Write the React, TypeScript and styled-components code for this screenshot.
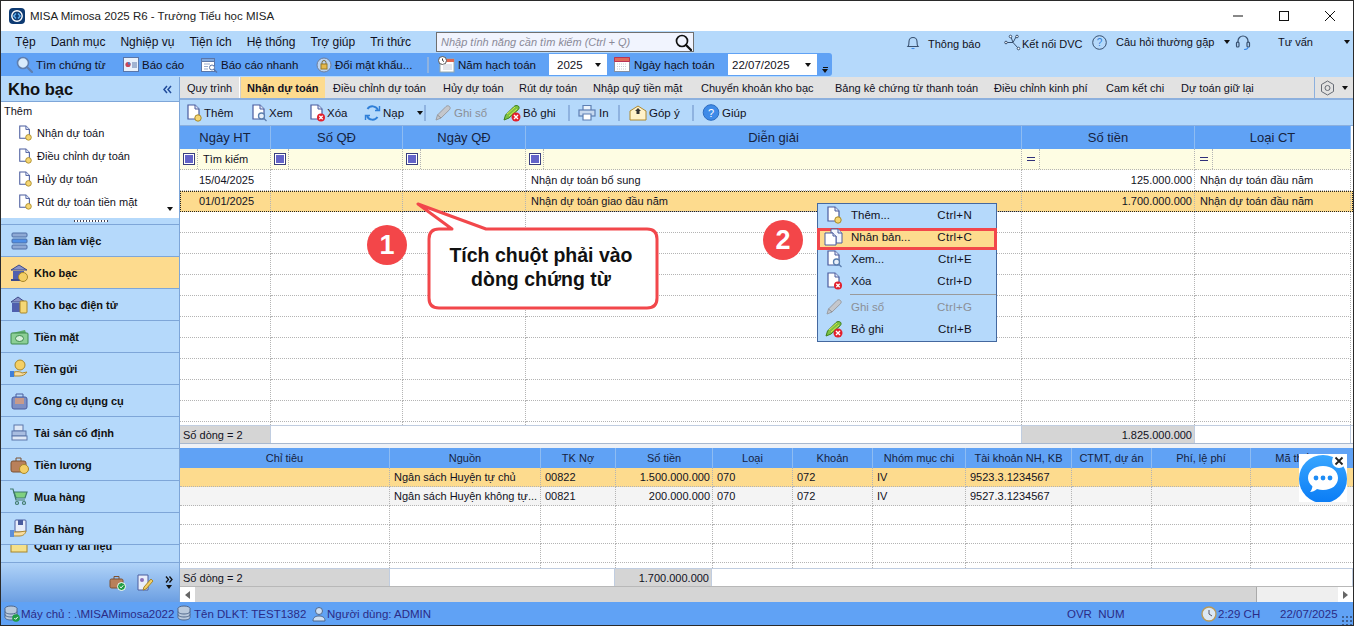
import React from 'react';
import styled, { createGlobalStyle } from 'styled-components';

const Global = createGlobalStyle`
  html, body { margin: 0; padding: 0; background: #fff; overflow: hidden; }
  * { box-sizing: border-box; }
`;

const FONT = `"Liberation Sans", Arial, sans-serif`;
const SKY = '#b5d9fb';
const BLUE = '#60a2f5';
const AMBER = '#fddb8e';
const INK = '#111122';

const Window = styled.div`
  position: relative; width: 1354px; height: 626px; overflow: hidden;
  display: flex; flex-direction: column;
  border: 1px solid #2a2a2a;
  font: 11px ${FONT}; color: ${INK}; background: #fff;
`;
const TitleBar = styled.div`
  height: 30px; flex: none; display: flex; align-items: center; padding-left: 8px; gap: 5px;
  font-size: 11.5px; color: #222;
`;
const TitleText = styled.span`flex: 1;`;
const WinButtons = styled.div`display: flex;`;
const WinButton = styled.div`width: 46px; height: 30px; display: flex; align-items: center; justify-content: center;`;

const MenuBar = styled.div`
  height: 22px; flex: none; background: ${SKY}; display: flex; align-items: center;
`;
const Grip = styled.div`
  width: 6px; height: 18px; margin-left: 4px; flex: none;
  background-image: radial-gradient(#7f9fc8 45%, transparent 50%); background-size: 2px 2px;
`;
const MenuItems = styled.div`display: flex; gap: 15px; margin-left: 4px; width: 421px; font-size: 12px;`;
const MenuItem = styled.span`white-space: nowrap;`;
const SearchBox = styled.div`
  width: 258px; height: 20px; background: #f1f4fe; border: 1px solid #6f6f6f; display: flex; align-items: center;
  justify-content: space-between; padding: 0 1px 0 4px; font-style: italic; color: #8a8a98; font-size: 11px;
`;
const RightMenu = styled.div`display: flex; align-items: center; margin-left: auto; height: 22px;`;
const RightItem = styled.span<{ $w: number }>`
  display: inline-flex; align-items: center; gap: 1px; white-space: nowrap; width: ${p => p.$w}px; flex: none;
`;
const RightLabel = styled.span<{ $ml?: number; $low?: boolean }>`
  margin-left: ${p => p.$ml ?? 0}px; padding-top: ${p => (p.$low ? 3 : 0)}px;
`;
const Caret = styled.span<{ $ml?: number; $mr?: number }>`
  display: inline-block; width: 0; height: 0; border: 3.5px solid transparent; border-top: 4px solid #111; border-bottom: 0;
  margin-left: ${p => p.$ml ?? 0}px; margin-right: ${p => p.$mr ?? 0}px; flex: none;
`;

const QuickRow = styled.div`height: 24px; flex: none; background: ${SKY}; display: flex; font-size: 11.5px;`;
const QuickBar = styled.div`
  width: 831px; height: 23px; background: ${BLUE}; display: flex; align-items: center; border-radius: 0 3px 3px 0;
`;
const QuickItem = styled.span<{ $w: number; $pl?: number }>`
  display: inline-flex; align-items: center; gap: 3px; width: ${p => p.$w}px; padding-left: ${p => p.$pl ?? 0}px; white-space: nowrap; flex: none;
`;
const VSep = styled.span<{ $ml?: number; $mr?: number }>`
  width: 2px; height: 16px; background: #8fb3e0; flex: none;
  margin-left: ${p => p.$ml ?? 0}px; margin-right: ${p => p.$mr ?? 0}px;
`;
const Combo = styled.div<{ $w: number; $pl: number }>`
  width: ${p => p.$w}px; height: 21px; background: #fff; display: flex; align-items: center; justify-content: space-between;
  padding: 0 6px 0 ${p => p.$pl}px; flex: none;
`;
const Overflow = styled.div`
  margin-left: 3px; width: 10px; height: 23px; display: flex; flex-direction: column; align-items: center; justify-content: flex-end; padding-bottom: 3px; gap: 1px;
`;
const OverflowBar = styled.span`width: 5px; height: 1px; background: #111;`;

const Body = styled.div`flex: 1; min-height: 0; display: flex;`;
const Sidebar = styled.div`
  width: 178px; flex: none; display: flex; flex-direction: column; background: ${SKY};
`;
const SideHead = styled.div`
  height: 25px; flex: none; display: flex; align-items: center; justify-content: space-between; padding: 0 7px 0 7px;
  font-weight: bold; font-size: 16.5px; color: #111; border-bottom: 1px solid #7ea6d8; background: ${SKY};
`;
const AddPanel = styled.div`
  height: 116px; flex: none; background: #fff; padding: 1px 0 0 3px; position: relative; overflow: hidden;
`;
const AddTitle = styled.div`height: 18px; line-height: 16px;`;
const AddItem = styled.div`
  height: 23px; display: flex; align-items: center; gap: 5px; padding-left: 14px;
`;
const PanelCaret = styled.span`position: absolute; right: 6px; bottom: 5px;`;
const Splitter = styled.div`
  height: 6px; flex: none; display: flex; justify-content: center; align-items: center; padding-left: 1px;
`;
const SplitterDots = styled.span`
  width: 34px; height: 2px; background-image: repeating-linear-gradient(90deg, #445 0 1px, #fff 1px 3px);
`;
const NavList = styled.div`flex: 1; min-height: 0; overflow: hidden; border-top: 1px solid #7ea6d8;`;
const NavItem = styled.div<{ $active?: boolean }>`
  position: relative; z-index: 1;
  height: 32px; display: flex; align-items: center; padding-left: 8px; gap: 5px; font-weight: bold; color: #111;
  border-bottom: 1px solid #7ea6d8; background: ${p => (p.$active ? AMBER : SKY)};
`;
const NavItemUnder = styled(NavItem)`z-index: 0; margin-top: -15px; border-bottom: 0;`;
const SideBottom = styled.div`
  height: 40px; flex: none; display: flex; align-items: center; justify-content: flex-end; gap: 11px; padding-right: 6px;
  background: linear-gradient(#b0d3f8, #6c9fe2); border-top: 1px solid #7ea6d8;
`;
const MoreBox = styled.div`display: flex; flex-direction: column; align-items: center; gap: 2px;`;

const Main = styled.div`
  flex: 1; min-width: 0; display: flex; flex-direction: column; border-left: 1px solid #7ea6d8;
`;
const Tabs = styled.div`
  height: 23px; flex: none; background: #e2e2e2; display: flex; border-bottom: 2px solid #8cb0de; overflow: hidden;
`;
const Tab = styled.div<{ $active?: boolean; $w: number; $pl?: number }>`
  width: ${p => p.$w}px; flex: none; display: flex; align-items: center; padding-left: ${p => p.$pl ?? 8}px; white-space: nowrap;
  background: ${p => (p.$active ? AMBER : 'transparent')}; font-weight: ${p => (p.$active ? 'bold' : 'normal')};
  ${p => (p.$active ? 'border-left: 1px solid #d0d0d0;' : '')}
`;
const TabFirst = styled(Tab)`border-right: 1px solid #fff;`;
const TabGear = styled.div`
  margin-left: auto; width: 39px; flex: none; display: flex; align-items: center; gap: 7px; padding-left: 5px;
  border-left: 1px solid #8cb0de;
`;
const Toolbar = styled.div`
  height: 26px; flex: none; background: ${SKY}; display: flex; align-items: center; padding-left: 6px; border-bottom: 1px solid #8cb0de; font-size: 11.5px;
`;
const ToolBtn = styled.span<{ $w: number; $off?: boolean }>`
  display: inline-flex; align-items: center; gap: 2px; width: ${p => p.$w}px; flex: none; white-space: nowrap;
  color: ${p => (p.$off ? '#8b8f96' : INK)};
`;

const TopGrid = styled.div`flex: 1; min-height: 0; display: flex; flex-direction: column;`;
const GridBody = styled.div`flex: 1; min-height: 0; overflow: hidden;`;
const Row = styled.div<{ $cols: string; $h: number; $bg?: string; $focus?: boolean }>`
  display: grid; grid-template-columns: ${p => p.$cols}; height: ${p => p.$h}px; background: ${p => p.$bg ?? '#fff'};
  ${p => (p.$focus ? 'outline: 1px dotted #222; outline-offset: -1px;' : '')}
`;
const Head = styled.div<{ $size: number }>`
  display: flex; align-items: center; justify-content: center; background: ${BLUE}; font-size: ${p => p.$size}px;
  border-right: 1px solid #8ebcf2; white-space: nowrap; overflow: hidden; color: #16233f;
`;
const Cell = styled.div<{ $right?: boolean; $pl?: number }>`
  display: flex; align-items: center; justify-content: ${p => (p.$right ? 'flex-end' : 'flex-start')};
  padding: 0 ${p => (p.$right ? 2 : 0)}px 0 ${p => p.$pl ?? 5}px; white-space: nowrap; overflow: hidden;
  border-right: 1px dotted #b4b4b4; border-bottom: 1px dotted #b4b4b4;
`;
const FilterCell = styled.div`
  display: flex; align-items: stretch; border-right: 1px dotted #b4b4b4; border-bottom: 1px dotted #b4b4b4; background: #fefde3; white-space: nowrap;
`;
const FilterOp = styled.div`
  width: 18px; flex: none; display: flex; align-items: center; justify-content: center; border-right: 1px dotted #b4b4b4;
`;
const FilterLabel = styled.div`padding-left: 5px; display: flex; align-items: center;`;
const FilterBox = styled.span`
  width: 12px; height: 12px; border: 1px solid #3a3f7e; background: #fff; display: flex; align-items: center; justify-content: center;
`;
const FilterDot = styled.span`width: 8px; height: 8px; background: #6464c8;`;
const EqSign = styled.span`width: 8px; height: 4px; border-top: 1px solid #30307a; border-bottom: 1px solid #30307a;`;
const FooterRow = styled.div<{ $cols: string }>`
  height: 18px; flex: none; display: grid; grid-template-columns: ${p => p.$cols}; border-top: 1px solid #c0cde0; background: #fff;
`;
const FootCell = styled.div<{ $gray?: boolean; $right?: boolean }>`
  display: flex; align-items: center; padding: 0 2px 0 3px; justify-content: ${p => (p.$right ? 'flex-end' : 'flex-start')};
  background: ${p => (p.$gray ? '#d5d5d5' : '#fff')}; border-right: 1px solid #c0cde0;
`;
const Divider = styled.div`
  height: 5px; flex: none; background: #eef1f6; border-top: 1px solid #a8b8cf;
`;
const LowerGrid = styled.div`height: 154px; flex: none; display: flex; flex-direction: column; overflow: hidden;`;
const Scrollbar = styled.div`
  height: 16px; flex: none; display: flex; background: #efefef; border-top: 1px solid #b8b8b8;
`;
const ScrollBtn = styled.div`width: 15px; flex: none; background: #fff; display: flex; align-items: center; justify-content: center;`;
const ScrollThumb = styled.div`width: 1062px; flex: none; background: #d5d5d5; border-right: 1px solid #aaa;`;
const ScrollTrack = styled.div`flex: 1;`;
const ArrowL = styled.span`width: 0; height: 0; border: 4px solid transparent; border-right: 5px solid #666; border-left: 0;`;
const ArrowR = styled.span`width: 0; height: 0; border: 4px solid transparent; border-left: 5px solid #666; border-right: 0;`;

const StatusBar = styled.div`
  height: 23px; flex: none; background: ${BLUE}; display: flex; align-items: center; color: #2b2b86; padding-left: 3px; position: relative; font-size: 11.5px;
`;
const StatusItem = styled.span<{ $w?: number }>`
  display: inline-flex; align-items: center; gap: 1px; white-space: nowrap; flex: none;
  ${p => (p.$w ? `width:${p.$w}px;` : '')}
`;
const ResizeGrip = styled.span`
  position: absolute; right: 0; bottom: 0; width: 12px; height: 10px;
  background-image: radial-gradient(#3d5f93 45%, transparent 50%); background-size: 4px 4px;
`;

/* overlays */
const ContextMenu = styled.div`
  position: absolute; left: 816px; top: 202px; width: 180px; height: 139px; background: ${SKY}; border: 1px solid #44689f;
  display: flex; flex-direction: column; font-size: 11.5px; isolation: isolate;
`;
const CtxItem = styled.div<{ $off?: boolean }>`
  height: 22px; flex: none; display: flex; align-items: center; padding-left: 6px; gap: 7px; position: relative;
  color: ${p => (p.$off ? '#8b8f96' : INK)};
`;
const CtxItemSelected = styled(CtxItem)`
  &::before {
    content: ''; position: absolute; z-index: -1; left: -1px; right: -1px; top: 2px; bottom: -2px;
    background: ${AMBER}; border: 3px solid #f2474b;
  }
`;
const CtxLabel = styled.span`width: 79px;`;
const CtxKey = styled.span`width: 35px; text-align: right; white-space: nowrap; letter-spacing: .3px;`;
const CtxSep = styled.div`height: 1px; background: #9a9a9a; margin: 2px 0 1px 32px; flex: none;`;
const CtxIconSlot = styled.span`width: 20px; display: flex; justify-content: center; flex: none;`;
const Badge = styled.div<{ $x: number; $y: number }>`
  position: absolute; left: ${p => p.$x}px; top: ${p => p.$y}px; width: 40px; height: 40px; border-radius: 50%; background: #f34649;
  color: #fff; font-weight: bold; font-size: 27px; display: flex; align-items: center; justify-content: center;
`;
const Callout = styled.div`position: absolute; left: 414px; top: 200px; width: 246px; height: 110px;`;
const CalloutText = styled.div`
  position: absolute; left: 13px; top: 42px; width: 226px; text-align: center; font-weight: bold; font-size: 19.5px; line-height: 24px; color: #111;
`;
const ChatWidget = styled.div`position: absolute; right: 6px; top: 453px; width: 48px; height: 48px; background: #fff;`;

/* icons */
const Svg = styled.svg`display: block; flex: none;`;
type BadgeKind = 'add' | 'view' | 'del' | 'none';
const PageIcon = ({ kind = 'none', size = 16 }: { kind?: BadgeKind; size?: number }) => (
  <Svg width={size} height={size + 2} viewBox="0 0 16 18">
    <path d="M2 1h7l4 4v10H2z" fill="#fff" stroke="#4a5c9e" strokeWidth="1.2" />
    <path d="M9 1v4h4" fill="#dfe6f6" stroke="#4a5c9e" strokeWidth="1" />
    {kind === 'add' && <circle cx="12" cy="14" r="3.2" fill="#f6d672" stroke="#a88a2a" strokeWidth="1" />}
    {kind === 'view' && <g fill="none" stroke="#5b7fae" strokeWidth="1.3"><circle cx="10.5" cy="12" r="3" fill="#e8f0fa" /><path d="M13 14.500l2.500 2.500" /></g>}
    {kind === 'del' && <g><circle cx="12" cy="13.500" r="4" fill="#e3202c" /><path d="M10.300 11.800l3.400 3.400M13.700 11.800l-3.400 3.400" stroke="#fff" strokeWidth="1.3" /></g>}
  </Svg>
);
const CopyIcon = () => (
  <Svg width="20" height="18" viewBox="0 0 20 18">
    <path d="M7 1h7l4 4v10h-6V8L9 5H7z" fill="#f3f6fc" stroke="#4a5c9e" />
    <path d="M14 1v4h4" fill="#dfe6f6" stroke="#4a5c9e" />
    <path d="M1 5h8l3 3v9H1z" fill="#fff" stroke="#4a5c9e" />
    <path d="M9 5v3h3" fill="#dfe6f6" stroke="#4a5c9e" />
  </Svg>
);
const PencilIcon = ({ size = 18 }: { size?: number }) => (
  <Svg width={size} height={size} viewBox="0 0 18 18">
    <path d="M2 16l1.500-5L12 2.500c1-1 2.500-1 3.500 0s.8 2.300 0 3.200L7 14z" fill="#c4c7cc" stroke="#9a9da3" />
    <path d="M3.500 11L7 14" stroke="#8b8e94" />
  </Svg>
);
const UnpostIcon = ({ size = 18 }: { size?: number }) => (
  <Svg width={size} height={size} viewBox="0 0 18 18">
    <path d="M1 16l1.500-5L11 2.500c1-1 3-1.400 4.400-.4 1 1 .8 2.500 0 3.400L6 14z" fill="#7cc242" stroke="#3d7f1e" />
    <path d="M4 10l8-7M6 12l8-7" stroke="#d8e84a" />
    <circle cx="13" cy="13" r="4.500" fill="#e3202c" />
    <path d="M11 11l4 4M15 11l-4 4" stroke="#fff" strokeWidth="1.4" />
  </Svg>
);
const SearchIcon = ({ size = 17, c = '#5f7faf', fill = '#d8ebfb', w = 1.6 }: { size?: number; c?: string; fill?: string; w?: number }) => (
  <Svg width={size} height={size} viewBox="0 0 17 17">
    <circle cx="7" cy="7" r="5.500" fill={fill} stroke={c} strokeWidth={w} />
    <path d="M11 11l5 5" stroke={c} strokeWidth={w + .6} strokeLinecap="round" />
  </Svg>
);
const ReportIcon = () => (
  <Svg width="16" height="15" viewBox="0 0 16 15">
    <rect x=".5" y=".5" width="15" height="14" fill="#e9f1fb" stroke="#5a76a8" />
    <circle cx="5" cy="7.500" r="2.600" fill="#c8475a" /><path d="M5 7.500V5a2.600 2.600 0 0 1 2.600 2.600z" fill="#4a79c4" />
    <path d="M9 6h5M9 8h5M9 10h5" stroke="#5a76a8" />
  </Svg>
);
const QuickReportIcon = () => (
  <Svg width="17" height="16" viewBox="0 0 17 16">
    <rect x=".5" y="1.500" width="13" height="13" fill="#fff" stroke="#5a76a8" />
    <path d="M.5 1.500h13v3H.5z" fill="#7fa7dc" stroke="#5a76a8" />
    <path d="M3 7h6M3 9.500h4M3 12h4" stroke="#9aaccd" />
    <circle cx="11" cy="10.500" r="2.500" fill="#fff" stroke="#5a76a8" /><path d="M13 12.500l3 3" stroke="#5a76a8" strokeWidth="1.5" />
  </Svg>
);
const LockIcon = () => (
  <Svg width="16" height="16" viewBox="0 0 16 16">
    <circle cx="8" cy="8" r="7" fill="#bcd4f0" stroke="#6e7f9e" />
    <rect x="5" y="7" width="6" height="5" fill="#e5b84b" stroke="#9a7a24" />
    <path d="M6 7V5.500a2 2 0 0 1 4 0V7" fill="none" stroke="#7a6a3a" />
  </Svg>
);
const YearIcon = () => (
  <Svg width="17" height="17" viewBox="0 0 17 17">
    <rect x="2" y="3" width="14" height="13" fill="#fff" stroke="#9aa" />
    <path d="M2 3h14v3H2z" fill="#e0664f" />
    <circle cx="4.500" cy="4.500" r="4" fill="#fff" stroke="#555" /><path d="M4.500 2.500v2l1.500 1" stroke="#333" fill="none" />
    <path d="M5 9h9M5 11h9M5 13h9" stroke="#c6ccd6" />
  </Svg>
);
const CalIcon = () => (
  <Svg width="17" height="17" viewBox="0 0 17 17">
    <rect x=".5" y="1.500" width="15" height="14" fill="#fff" stroke="#8790a0" />
    <path d="M.5 1.500h15v4H.5z" fill="#df6a5a" stroke="#b35" />
    <path d="M3 8h10M3 10.500h10M3 13h10" stroke="#c6ccd6" strokeDasharray="1 1" />
  </Svg>
);
const PrinterIcon = () => (
  <Svg width="19" height="17" viewBox="0 0 19 17" fill="none" stroke="#5d7fb3" strokeWidth="1.2">
    <path d="M5 6V1.500h8V6" fill="#eaf2fb" /><rect x="1" y="6" width="16" height="6" fill="#c7d9ef" /><path d="M5 10h8v6H5z" fill="#fff" />
  </Svg>
);
const MailUpIcon = () => (
  <Svg width="18" height="16" viewBox="0 0 18 16">
    <path d="M1 6l8-5 8 5v9H1z" fill="#fff2c9" stroke="#b08a2e" />
    <path d="M9 3l3 3h-1.500v3h-3V6H6z" fill="#333" />
  </Svg>
);
const HelpIcon = () => (
  <Svg width="18" height="17" viewBox="0 0 17 17">
    <circle cx="8.500" cy="8.500" r="7.800" fill="#3f8be8" stroke="#2c6cc0" />
    <text x="8.500" y="12.500" textAnchor="middle" fontSize="11" fill="#fff" fontFamily="Liberation Sans">?</text>
  </Svg>
);
const RefreshIcon = () => (
  <Svg width="17" height="16" viewBox="0 0 16 16" fill="none" stroke="#2f7fd8" strokeWidth="2">
    <path d="M13.500 5A6 6 0 0 0 3 4M2.500 11A6 6 0 0 0 13 12" />
    <path d="M10.500 5.500h4.500V1M5.500 10.500H1V15" strokeWidth="1.4" />
  </Svg>
);
const GearIcon = () => (
  <Svg width="15" height="16" viewBox="0 0 15 16" fill="none" stroke="#666b74">
    <path d="M7.500 1l6 3.500v7l-6 3.500-6-3.500v-7z" /><circle cx="7.500" cy="8" r="2.500" />
  </Svg>
);
const BellIcon = () => (
  <Svg width="14" height="15" viewBox="0 0 14 15" fill="none" stroke="#38506f" strokeWidth="1.1">
    <path d="M2 11.500c1-1 1-3 1-5a4 4 0 0 1 8 0c0 2 0 4 1 5z" /><path d="M5.500 13.500h3" stroke="#3f8be8" />
  </Svg>
);
const NodesIcon = () => (
  <Svg width="17" height="17" viewBox="0 0 17 17" fill="none" stroke="#38506f">
    <path d="M3 8.500L9 8.500M9 8.500L12 3M9 8.500L14 14M9 8.500L7 3" />
    <circle cx="2" cy="8.500" r="1.300" fill="#fff" /><circle cx="13" cy="2.500" r="1.300" fill="#fff" /><circle cx="14.500" cy="14.500" r="1.300" fill="#fff" /><circle cx="6.500" cy="2.500" r="1.300" fill="#fff" />
  </Svg>
);
const QuestionRing = () => (
  <Svg width="15" height="15" viewBox="0 0 15 15">
    <circle cx="7.500" cy="7.500" r="6.800" fill="none" stroke="#38506f" />
    <text x="7.500" y="11" textAnchor="middle" fontSize="10" fill="#2f7fd8" fontFamily="Liberation Sans">?</text>
  </Svg>
);
const HeadsetIcon = () => (
  <Svg width="16" height="17" viewBox="0 0 16 17" fill="none" stroke="#38506f" strokeWidth="1.2">
    <path d="M3 9V7a5 5 0 0 1 10 0v2" /><rect x="1.500" y="8" width="2.500" height="5" rx="1" /><rect x="12" y="8" width="2.500" height="5" rx="1" />
    <path d="M13 13c0 2-2 2.500-4 2.500" stroke="#3f8be8" />
  </Svg>
);
const DoubleChevron = () => (
  <Svg width="9" height="9" viewBox="0 0 9 9" fill="none" stroke="#1f4a9a" strokeWidth="1.5">
    <path d="M4 1L1 4.500 4 8M8 1L5 4.500 8 8" />
  </Svg>
);
const MoreChevron = () => (
  <Svg width="8" height="7" viewBox="0 0 8 7" fill="none" stroke="#111" strokeWidth="1.3">
    <path d="M1 .5L3.500 3.500 1 6.500M4.500 .5L7 3.500 4.500 6.500" />
  </Svg>
);
const Logo = () => (
  <Svg width="16" height="16" viewBox="0 0 16 16">
    <rect width="16" height="16" rx="4" fill="#0d3a72" />
    <circle cx="8" cy="8" r="5.200" fill="none" stroke="#fff" strokeWidth="1.4" />
    <path d="M7 5.500L4.800 8 7 10.500M9 5.500L11.200 8 9 10.500" fill="none" stroke="#5fb0f0" strokeWidth="1.4" />
  </Svg>
);
const NavIcons: Record<string, React.ReactNode> = {
  desk: <g fill="#8fa9d4" stroke="#4f6ea6"><rect x="3" y="2" width="15" height="4" rx="1" /><rect x="3" y="8" width="15" height="4" rx="1" fill="#4f8fe6" /><rect x="3" y="14" width="15" height="4" rx="1" /></g>,
  bank: <g><path d="M2 7l8-5 8 5z" fill="#8a93c9" stroke="#3d4a8a" /><rect x="4" y="8" width="11" height="8" fill="#4f5fae" /><rect x="2" y="16" width="15" height="2" fill="#3d4a8a" /><circle cx="14" cy="14" r="4.500" fill="#f4cf65" stroke="#a8862a" /></g>,
  ebank: <g><path d="M2 7l7-5 7 5z" fill="#8a93c9" stroke="#3d4a8a" /><rect x="3" y="8" width="10" height="9" fill="#4f5fae" /><rect x="11" y="6" width="7" height="12" rx="1" fill="#f4d775" stroke="#a8862a" /></g>,
  cash: <g><path d="M3 6l13-3 1 3z" fill="#5fae6f" /><rect x="2" y="6" width="17" height="11" rx="1" fill="#8ccf95" stroke="#3f8a4f" /><ellipse cx="10.500" cy="11.500" rx="4" ry="3" fill="#d6efda" stroke="#3f8a4f" /></g>,
  deposit: <g><circle cx="11" cy="6" r="5" fill="#f4cf65" stroke="#a8862a" /><path d="M5 13c4-1 7 0 8 1l5-1c-2 3-5 4-8 4H5z" fill="#f8dca0" stroke="#b08a2e" /><rect x="1" y="12" width="4" height="6" fill="#3f7fd8" /></g>,
  tools: <g><rect x="3" y="6" width="15" height="12" rx="2" fill="#7d8fc4" stroke="#4a5c9e" /><path d="M7 6V3h7v3" fill="none" stroke="#4a5c9e" /><rect x="6" y="7" width="9" height="6" fill="#c79a8a" /></g>,
  asset: <g fill="#dfe8f6" stroke="#5d77aa"><rect x="5" y="2" width="9" height="6" /><rect x="3" y="8" width="14" height="5" fill="#a9bde0" /><rect x="3" y="13" width="15" height="4" /></g>,
  salary: <g><rect x="2" y="6" width="15" height="11" rx="2" fill="#b9805a" stroke="#7d5232" /><path d="M7 6V3h5v3" fill="none" stroke="#7d5232" /><circle cx="15" cy="14" r="4.500" fill="#f4cf65" stroke="#a8862a" /></g>,
  cart: <g fill="none" stroke="#3f7a6a" strokeWidth="1.2"><path d="M1 2h3l3 11h9" /><path d="M5 5h13l-2 6H7z" fill="#7fd07f" /><circle cx="8" cy="16" r="1.500" /><circle cx="15" cy="16" r="1.500" /></g>,
  sale: <g><rect x="6" y="1" width="11" height="12" rx="1" fill="#e8eefb" stroke="#4a5c9e" /><rect x="9" y="1" width="5" height="5" fill="#4a5c9e" /><path d="M3 13h7l7-1c-1 4-4 5-7 5H3z" fill="#f8dca0" stroke="#b08a2e" /><rect x="1" y="11" width="4" height="7" fill="#5d8fd8" /></g>,
  docs: <g><rect x="2" y="3" width="16" height="13" fill="#f4e08a" stroke="#a8862a" /></g>,
};
const NavIcon = ({ name }: { name: string }) => (
  <Svg width="20" height="20" viewBox="0 0 20 20">{NavIcons[name]}</Svg>
);
const DbIcon = ({ ok }: { ok?: boolean }) => (
  <Svg width="16" height="17" viewBox="0 0 16 17" fill="#b9c9dc" stroke="#50688c">
    <ellipse cx="7" cy="3.500" rx="6" ry="2.500" /><path d="M1 3.500v9c0 1.400 2.700 2.500 6 2.500s6-1.100 6-2.500v-9" /><path d="M1 6.500c0 1.400 2.700 2.500 6 2.500s6-1.100 6-2.500M1 9.500c0 1.400 2.700 2.500 6 2.500s6-1.100 6-2.500" fill="none" />
    {ok && <g><circle cx="12" cy="13" r="3.800" fill="#1f9d45" stroke="none" /><path d="M10.300 13l1.300 1.300 2.200-2.400" fill="none" stroke="#fff" /></g>}
  </Svg>
);
const UserIcon = () => (
  <Svg width="14" height="16" viewBox="0 0 14 16" fill="#cfdff2" stroke="#50688c">
    <circle cx="7" cy="5" r="3.500" /><path d="M1 15c0-4 3-5 6-5s6 1 6 5z" />
  </Svg>
);
const ClockIcon = () => (
  <Svg width="16" height="16" viewBox="0 0 16 16">
    <circle cx="8" cy="8" r="7" fill="#dce8f4" stroke="#b99a5a" strokeWidth="1.4" />
    <path d="M8 4v4l3 2" fill="none" stroke="#556" />
  </Svg>
);
const BagOkIcon = () => (
  <Svg width="17" height="17" viewBox="0 0 17 17">
    <rect x="1" y="5" width="13" height="9" rx="1.500" fill="#b9805a" stroke="#7d5232" /><path d="M5 5V2.500h5V5" fill="none" stroke="#7d5232" />
    <circle cx="12.500" cy="12.500" r="4" fill="#1f9d45" stroke="#fff" /><path d="M10.700 12.500l1.400 1.400 2.200-2.600" fill="none" stroke="#fff" />
  </Svg>
);
const NoteEditIcon = () => (
  <Svg width="17" height="17" viewBox="0 0 17 17">
    <path d="M1 1h10v15H1z" fill="#e9eefb" stroke="#4a5c9e" /><circle cx="5" cy="6" r="2" fill="#8a70b8" />
    <path d="M7 13l7-8 2 2-7 8-3 1z" fill="#f4cf65" stroke="#a8862a" />
  </Svg>
);

const TOP_COLS = '91px 132px 123px 496px 173px 156px';
const LOW_COLS = '210px 151px 75px 97px 80px 80px 93px 106px 80px 99px 110px';
const LOW_HEAD = ['Chỉ tiêu', 'Nguồn', 'TK Nợ', 'Số tiền', 'Loại', 'Khoản', 'Nhóm mục chi', 'Tài khoản NH, KB', 'CTMT, dự án', 'Phí, lệ phí', 'Mã thống kê'];
const LOW_ROWS = [
  { bg: AMBER, cells: ['', 'Ngân sách Huyện tự chủ', '00822', '1.500.000.000', '070', '072', 'IV', '9523.3.1234567', '', '', ''] },
  { bg: '#f4f4f4', cells: ['', 'Ngân sách Huyện không tự...', '00821', '200.000.000', '070', '072', 'IV', '9527.3.1234567', '', '', ''] },
];
const TOP_ROWS = [
  { date: '15/04/2025', text: 'Nhận dự toán bổ sung', amt: '125.000.000', focus: false },
  { date: '01/01/2025', text: 'Nhận dự toán giao đầu năm', amt: '1.700.000.000', focus: true },
];

const TABS: [string, number][] = [
  ['Điều chỉnh dự toán', 110], ['Hủy dự toán', 76], ['Rút dự toán', 74], ['Nhập quỹ tiền mặt', 108],
  ['Chuyển khoản kho bạc', 134], ['Bảng kê chứng từ thanh toán', 159], ['Điều chỉnh kinh phí', 112], ['Cam kết chi', 75], ['Dự toán giữ lại', 100],
];
const NAV: [string, string, boolean?][] = [
  ['desk', 'Bàn làm việc'], ['bank', 'Kho bạc', true], ['ebank', 'Kho bạc điện tử'], ['cash', 'Tiền mặt'], ['deposit', 'Tiền gửi'],
  ['tools', 'Công cụ dụng cụ'], ['asset', 'Tài sản cố định'], ['salary', 'Tiền lương'], ['cart', 'Mua hàng'], ['sale', 'Bán hàng'],
];

export default function App() {
  return (
    <Window>
      <Global />
      <TitleBar>
        <Logo />
        <TitleText>MISA Mimosa 2025 R6 - Trường Tiểu học MISA</TitleText>
        <WinButtons>
          <WinButton><Svg width="12" height="12" viewBox="0 0 12 12"><path d="M1 6h10" stroke="#111" /></Svg></WinButton>
          <WinButton><Svg width="12" height="12" viewBox="0 0 12 12"><rect x="1.500" y="1.500" width="9" height="9" fill="none" stroke="#111" /></Svg></WinButton>
          <WinButton><Svg width="12" height="12" viewBox="0 0 12 12"><path d="M1 1l10 10M11 1L1 11" stroke="#111" /></Svg></WinButton>
        </WinButtons>
      </TitleBar>

      <MenuBar>
        <Grip />
        <MenuItems>
          {['Tệp', 'Danh mục', 'Nghiệp vụ', 'Tiện ích', 'Hệ thống', 'Trợ giúp', 'Tri thức'].map(m => <MenuItem key={m}>{m}</MenuItem>)}
        </MenuItems>
        <SearchBox>Nhập tính năng cần tìm kiếm (Ctrl + Q)<SearchIcon size={17} c="#111" fill="none" w={1.7} /></SearchBox>
        <RightMenu>
          <RightItem $w={98}><BellIcon /><RightLabel $ml={7} $low>Thông báo</RightLabel></RightItem>
          <RightItem $w={88}><NodesIcon /><RightLabel $low>Kết nối DVC</RightLabel></RightItem>
          <RightItem $w={24}><QuestionRing /></RightItem>
          <RightItem $w={108}>Câu hỏi thường gặp</RightItem>
          <Caret $mr={5} />
          <RightItem $w={43}><HeadsetIcon /></RightItem>
          <RightItem $w={66}>Tư vấn</RightItem>
          <Caret $mr={3} />
        </RightMenu>
      </MenuBar>

      <QuickRow>
        <QuickBar>
          <Grip />
          <QuickItem $w={112} $pl={5}><SearchIcon />Tìm chứng từ</QuickItem>
          <QuickItem $w={78}><ReportIcon />Báo cáo</QuickItem>
          <QuickItem $w={115}><QuickReportIcon />Báo cáo nhanh</QuickItem>
          <QuickItem $w={111}><LockIcon />Đổi mật khẩu...</QuickItem>
          <VSep $mr={9} />
          <QuickItem $w={111}><YearIcon />Năm hạch toán</QuickItem>
          <Combo $w={58} $pl={8}>2025<Caret /></Combo>
          <QuickItem $w={121} $pl={7}><CalIcon />Ngày hạch toán</QuickItem>
          <Combo $w={89} $pl={4}>22/07/2025<Caret /></Combo>
          <Overflow><OverflowBar /><Caret /></Overflow>
        </QuickBar>
      </QuickRow>

      <Body>
        <Sidebar>
          <SideHead>Kho bạc<DoubleChevron /></SideHead>
          <AddPanel>
            <AddTitle>Thêm</AddTitle>
            {['Nhận dự toán', 'Điều chỉnh dự toán', 'Hủy dự toán', 'Rút dự toán tiền mặt'].map(t => (
              <AddItem key={t}><PageIcon kind="add" size={14} />{t}</AddItem>
            ))}
            <PanelCaret><Caret /></PanelCaret>
          </AddPanel>
          <Splitter><SplitterDots /></Splitter>
          <NavList>
            {NAV.map(([ic, label, active]) => (
              <NavItem key={label} $active={active}><NavIcon name={ic} />{label}</NavItem>
            ))}
            <NavItemUnder><NavIcon name="docs" />Quản lý tài liệu</NavItemUnder>
          </NavList>
          <SideBottom>
            <BagOkIcon />
            <NoteEditIcon />
            <MoreBox><MoreChevron /><Caret /></MoreBox>
          </SideBottom>
        </Sidebar>

        <Main>
          <Tabs>
            <TabFirst $w={60} $pl={7}>Quy trình</TabFirst>
            <Tab $active $w={85} $pl={6}>Nhận dự toán</Tab>
            {TABS.map(([t, w]) => <Tab key={t} $w={w}>{t}</Tab>)}
            <TabGear><GearIcon /><Caret /></TabGear>
          </Tabs>
          <Toolbar>
            <ToolBtn $w={65}><PageIcon kind="add" />Thêm</ToolBtn>
            <ToolBtn $w={58}><PageIcon kind="view" />Xem</ToolBtn>
            <ToolBtn $w={55}><PageIcon kind="del" />Xóa</ToolBtn>
            <ToolBtn $w={53}><RefreshIcon />Nạp</ToolBtn>
            <Caret $mr={1} />
            <VSep $mr={8} />
            <ToolBtn $w={69} $off><PencilIcon />Ghi sổ</ToolBtn>
            <ToolBtn $w={65}><UnpostIcon />Bỏ ghi</ToolBtn>
            <VSep $mr={8} />
            <ToolBtn $w={40}><PrinterIcon />In</ToolBtn>
            <VSep $mr={9} />
            <ToolBtn $w={63}><MailUpIcon />Góp ý</ToolBtn>
            <VSep $mr={8} />
            <ToolBtn $w={60}><HelpIcon />Giúp</ToolBtn>
          </Toolbar>

          <TopGrid>
            <Row $cols={TOP_COLS} $h={23}>
              {['Ngày HT', 'Số QĐ', 'Ngày QĐ', 'Diễn giải', 'Số tiền', 'Loại CT'].map(h => <Head key={h} $size={13}>{h}</Head>)}
            </Row>
            <GridBody>
              <Row $cols={TOP_COLS} $h={21}>
                <FilterCell><FilterOp><FilterBox><FilterDot /></FilterBox></FilterOp><FilterLabel>Tìm kiếm</FilterLabel></FilterCell>
                {[0, 1, 2].map(i => <FilterCell key={i}><FilterOp><FilterBox><FilterDot /></FilterBox></FilterOp></FilterCell>)}
                {[0, 1].map(i => <FilterCell key={i}><FilterOp><EqSign /></FilterOp></FilterCell>)}
              </Row>
              {TOP_ROWS.map(r => (
                <Row key={r.date} $cols={TOP_COLS} $h={21} $bg={r.focus ? AMBER : '#fff'} $focus={r.focus}>
                  <Cell $pl={19}>{r.date}</Cell><Cell /><Cell /><Cell>{r.text}</Cell><Cell $right>{r.amt}</Cell><Cell>Nhận dự toán đầu năm</Cell>
                </Row>
              ))}
              {Array.from({ length: 11 }, (_, i) => (
                <Row key={i} $cols={TOP_COLS} $h={21}>
                  {[0, 1, 2, 3, 4, 5].map(c => <Cell key={c} />)}
                </Row>
              ))}
            </GridBody>
            <FooterRow $cols="91px 751px 173px 156px">
              <FootCell $gray>Số dòng = 2</FootCell><FootCell /><FootCell $gray $right>1.825.000.000</FootCell><FootCell />
            </FooterRow>
          </TopGrid>
          <Divider />
          <LowerGrid>
            <Row $cols={LOW_COLS} $h={20}>
              {LOW_HEAD.map(h => <Head key={h} $size={11}>{h}</Head>)}
            </Row>
            <GridBody>
              {LOW_ROWS.map((r, ri) => (
                <Row key={ri} $cols={LOW_COLS} $h={19} $bg={r.bg}>
                  {r.cells.map((c, i) => <Cell key={i} $right={i === 3} $pl={i === 3 ? 0 : 4}>{c}</Cell>)}
                </Row>
              ))}
              {[0, 1, 2, 3].map(i => (
                <Row key={i} $cols={LOW_COLS} $h={19}>
                  {LOW_HEAD.map(h => <Cell key={h} />)}
                </Row>
              ))}
            </GridBody>
            <FooterRow $cols="210px 225px 97px 1fr">
              <FootCell $gray>Số dòng = 2</FootCell><FootCell /><FootCell $gray $right>1.700.000.000</FootCell><FootCell />
            </FooterRow>
            <Scrollbar>
              <ScrollBtn><ArrowL /></ScrollBtn>
              <ScrollThumb />
              <ScrollTrack />
              <ScrollBtn><ArrowR /></ScrollBtn>
            </Scrollbar>
          </LowerGrid>
        </Main>
      </Body>

      <StatusBar>
        <StatusItem $w={173}><DbIcon ok />Máy chủ : .\MISAMimosa2022</StatusItem>
        <StatusItem $w={135}><DbIcon />Tên DLKT: TEST1382</StatusItem>
        <StatusItem $w={755}><UserIcon />Người dùng: ADMIN</StatusItem>
        <StatusItem $w={134}>OVR&nbsp;&nbsp;NUM</StatusItem>
        <StatusItem $w={79}><ClockIcon />2:29 CH</StatusItem>
        <StatusItem>22/07/2025</StatusItem>
        <ResizeGrip />
      </StatusBar>

      <Callout>
        <svg width="246" height="110" viewBox="414 200 246 110">
          <path d="M438 228H451L417 203L485 228H646Q656 228 656 238V297Q656 307 646 307H438Q428 307 428 297V238Q428 228 438 228Z" fill="#fff" stroke="#f2474b" strokeWidth="3" strokeLinejoin="round" />
        </svg>
        <CalloutText>Tích chuột phải vào<br />dòng chứng từ</CalloutText>
      </Callout>
      <Badge $x={366} $y={224}>1</Badge>
      <Badge $x={762} $y={219}>2</Badge>

      <ContextMenu>
        <CtxItem><CtxIconSlot><PageIcon kind="add" /></CtxIconSlot><CtxLabel>Thêm...</CtxLabel><CtxKey>Ctrl+N</CtxKey></CtxItem>
        <CtxItemSelected><CtxIconSlot><CopyIcon /></CtxIconSlot><CtxLabel>Nhân bản...</CtxLabel><CtxKey>Ctrl+C</CtxKey></CtxItemSelected>
        <CtxItem><CtxIconSlot><PageIcon kind="view" /></CtxIconSlot><CtxLabel>Xem...</CtxLabel><CtxKey>Ctrl+E</CtxKey></CtxItem>
        <CtxItem><CtxIconSlot><PageIcon kind="del" /></CtxIconSlot><CtxLabel>Xóa</CtxLabel><CtxKey>Ctrl+D</CtxKey></CtxItem>
        <CtxSep />
        <CtxItem $off><CtxIconSlot><PencilIcon /></CtxIconSlot><CtxLabel>Ghi sổ</CtxLabel><CtxKey>Ctrl+G</CtxKey></CtxItem>
        <CtxItem><CtxIconSlot><UnpostIcon /></CtxIconSlot><CtxLabel>Bỏ ghi</CtxLabel><CtxKey>Ctrl+B</CtxKey></CtxItem>
      </ContextMenu>

      <ChatWidget>
        <svg width="48" height="48" viewBox="0 0 48 48">
          <defs><linearGradient id="chatg" x1="0" y1="0" x2="0" y2="1"><stop offset="0" stopColor="#38a6ff" /><stop offset="1" stopColor="#0a7cf5" /></linearGradient></defs>
          <circle cx="24" cy="25" r="24" fill="url(#chatg)" />
          <path d="M24 12c9 0 15 5 15 12s-6 12-15 12c-2 0-4-.3-6-.9-2 1.800-5 2.900-7 2.900 1.500-1.600 2.300-3.600 2.400-5.800C10.700 29.900 9 27.200 9 24c0-7 6-12 15-12z" fill="#fff" />
          <circle cx="17" cy="24" r="2.400" fill="#1e8cf5" /><circle cx="24" cy="24" r="2.400" fill="#1e8cf5" /><circle cx="31" cy="24" r="2.400" fill="#1e8cf5" />
          <circle cx="40" cy="7" r="7" fill="#fff" />
          <path d="M36.500 3.500l7 7M43.500 3.500l-7 7" stroke="#222" strokeWidth="1.8" />
        </svg>
      </ChatWidget>
    </Window>
  );
}
